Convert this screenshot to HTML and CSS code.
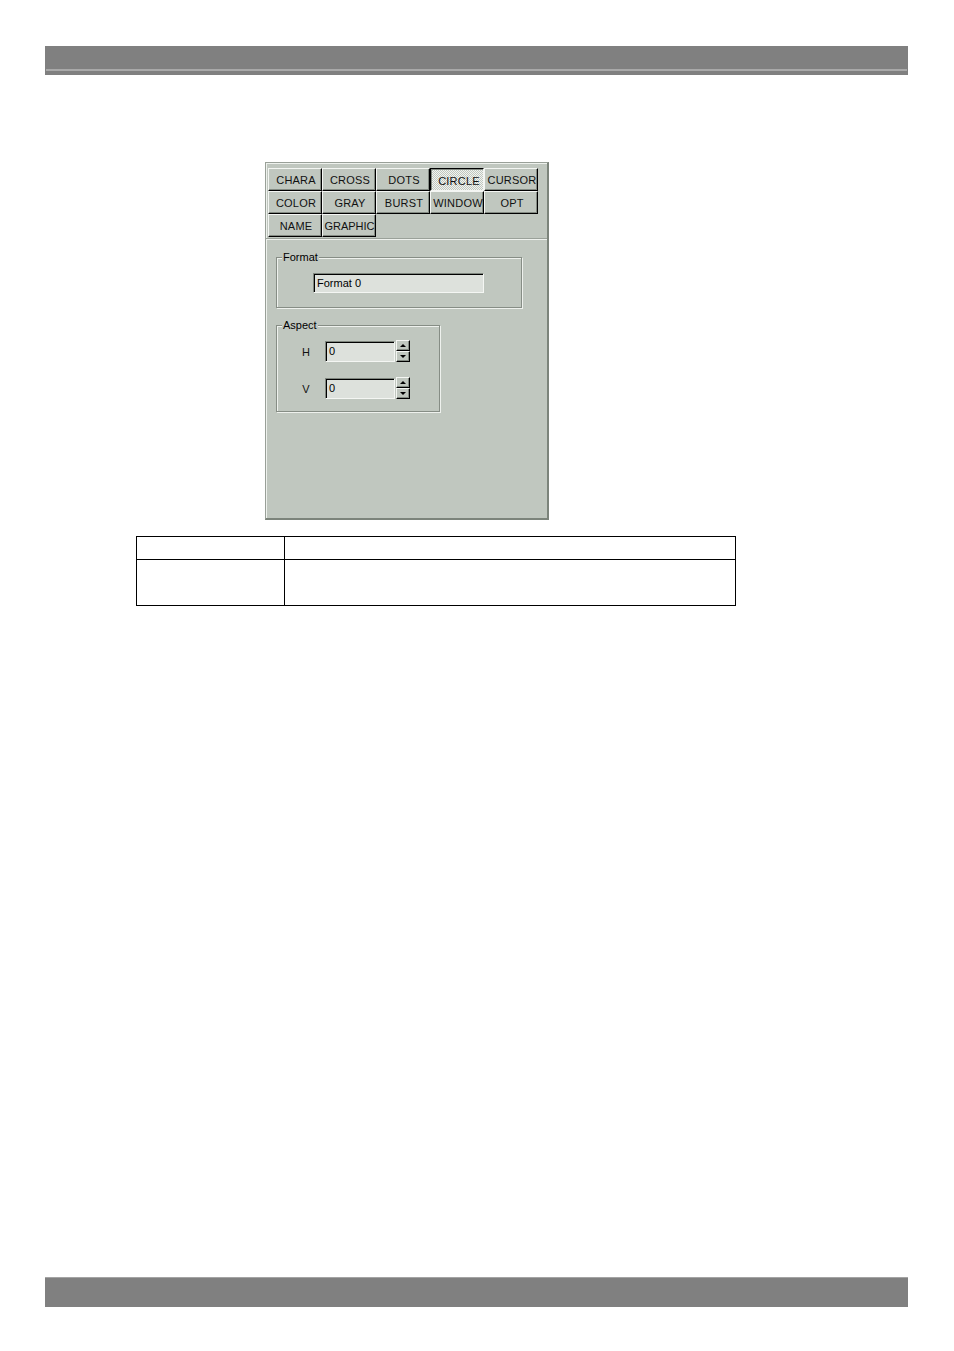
FILE: index.html
```html
<!DOCTYPE html>
<html>
<head>
<meta charset="utf-8">
<link rel="stylesheet" href="styles.css">
</head>
<body>
<div class="bar bar-top"></div>

<div class="dialog">
  <div class="tabs">
    <div class="tab">CHARA</div>
    <div class="tab">CROSS</div>
    <div class="tab">DOTS</div>
    <div class="tab tab-active">CIRCLE</div>
    <div class="tab">CURSOR</div>
    <div class="tab">COLOR</div>
    <div class="tab">GRAY</div>
    <div class="tab">BURST</div>
    <div class="tab">WINDOW</div>
    <div class="tab">OPT</div>
    <div class="tab">NAME</div>
    <div class="tab tab-tight">GRAPHIC</div>
  </div>
  <div class="panel">
    <div class="group group-format">
      <span class="group-label">Format</span>
      <div class="field field-format">Format 0</div>
    </div>
    <div class="group group-aspect">
      <span class="group-label">Aspect</span>
      <div class="spin-row">
        <span class="spin-label">H</span>
        <div class="field field-num">0</div>
        <div class="spinner">
          <div class="spin-btn"><span class="arrow-up"></span></div>
          <div class="spin-btn"><span class="arrow-down"></span></div>
        </div>
      </div>
      <div class="spin-row">
        <span class="spin-label">V</span>
        <div class="field field-num">0</div>
        <div class="spinner">
          <div class="spin-btn"><span class="arrow-up"></span></div>
          <div class="spin-btn"><span class="arrow-down"></span></div>
        </div>
      </div>
    </div>
  </div>
</div>

<table class="info">
  <tr class="row-head"><td class="c1"></td><td class="c2"></td></tr>
  <tr class="row-body"><td class="c1"></td><td class="c2"></td></tr>
</table>

<div class="bar bar-bottom"></div>
</body>
</html>
```

FILE: styles.css
```css
* { box-sizing: border-box; }
html, body { margin: 0; padding: 0; background: #fff; }
body {
  width: 954px;
  min-height: 1351px;
  font-family: "Liberation Sans", Arial, sans-serif;
  padding-top: 46px;
  overflow: hidden;
}

.bar {
  margin-left: 45px;
  width: 863px;
  background: #808080;
}
.bar-top {
  height: 29px;
  background:
    linear-gradient(#a9a9a9, #a9a9a9) 1px 23px / 861px 2px no-repeat,
    #808080;
}
.bar-bottom {
  margin-top: 671px;
  height: 30px;
  border-top: 1px solid #a4a4a4;
}

/* dialog */
.dialog {
  margin: 87px 0 0 265px;
  width: 284px;
  height: 358px;
  background: #c0c7bf;
  border-top: 1px solid #99a098;
  border-left: 1px solid #99a098;
  border-right: 2px solid #7c847b;
  border-bottom: 2px solid #7c847b;
  box-shadow: inset 1px 1px 0 #eef1ed;
  padding: 5px 0 0 0;
  font-size: 11px;
  color: #111;
}

.tabs {
  margin-left: 2px;
  display: grid;
  grid-template-columns: repeat(5, 54px);
  grid-auto-rows: 23px;
}
.tab {
  display: flex;
  align-items: center;
  justify-content: center;
  white-space: nowrap;
  overflow: hidden;
  background: #c0c7bf;
  border-top: 1px solid #f4f6f3;
  border-left: 1px solid #f4f6f3;
  border-right: 1px solid #000;
  border-bottom: 1px solid #000;
  box-shadow: inset -1px -1px 0 #848b83;
  letter-spacing: 0.2px;
  padding-top: 1px;
  padding-left: 2px;
}
.tab-tight {
  letter-spacing: 0;
  padding-left: 1px;
}
.tab-active {
  background: repeating-conic-gradient(#f2f4f1 0 25%, #c0c7bf 0 50%) 0 0 / 2px 2px;
  border-top: 1px solid #000;
  border-left: 1px solid #000;
  border-right: 1px solid #f4f6f3;
  border-bottom: 1px solid #f4f6f3;
  box-shadow: inset 1px 1px 0 #848b83;
  padding-top: 3px;
  padding-left: 4px;
}

.panel {
  margin-top: 1px;
  border-top: 1px solid #9aa199;
  box-shadow: inset 0 1px 0 #eef1ed;
  padding: 18px 0 0 10px;
}

.group {
  position: relative;
  border: 1px solid #868d85;
  box-shadow: inset 1px 1px 0 #eef1ed, 1px 1px 0 #eef1ed;
}
.group-label {
  position: absolute;
  top: -8px;
  left: 5px;
  padding: 0 1px;
  background: #c0c7bf;
  font-size: 11px;
  line-height: 14px;
  color: #000;
}
.group-format {
  width: 246px;
  height: 51px;
  padding: 15px 0 0 36px;
}
.group-aspect {
  margin-top: 17px;
  width: 164px;
  height: 87px;
  padding: 14px 0 0 20px;
}

.field {
  background: #dde1dc;
  border-top: 1px solid #7f867e;
  border-left: 1px solid #7f867e;
  border-right: 1px solid #f4f6f3;
  border-bottom: 1px solid #f4f6f3;
  box-shadow: inset 1px 1px 0 #000;
  color: #000;
  font-size: 11px;
  line-height: 16px;
  padding: 1px 0 0 3px;
}
.field-format {
  width: 171px;
  height: 20px;
}

.spin-row {
  display: flex;
  align-items: center;
  height: 22px;
}
.spin-row + .spin-row { margin-top: 15px; }
.spin-label {
  width: 18px;
  margin-right: 10px;
  text-align: center;
  font-size: 11px;
  color: #111;
  padding-top: 2px;
}
.field-num {
  width: 70px;
  height: 21px;
}
.spinner {
  margin-left: 1px;
  width: 14px;
  height: 22px;
  display: flex;
  flex-direction: column;
}
.spin-btn {
  height: 11px;
  display: flex;
  align-items: center;
  justify-content: center;
  background: #c0c7bf;
  border-top: 1px solid #f4f6f3;
  border-left: 1px solid #f4f6f3;
  border-right: 1px solid #000;
  border-bottom: 1px solid #000;
  box-shadow: inset -1px -1px 0 #848b83;
}
.arrow-up, .arrow-down {
  width: 0;
  height: 0;
  border-left: 3px solid transparent;
  border-right: 3px solid transparent;
}
.arrow-up { border-bottom: 3px solid #000; margin-right: 1px; }
.arrow-down { border-top: 3px solid #000; margin-right: 1px; }

/* table */
.info {
  margin: 16px 0 0 136px;
  width: 600px;
  border-collapse: collapse;
}
.info td {
  border: 1px solid #000;
  padding: 0;
}
.info .c1 { width: 148px; }
.row-head td { height: 23px; }
.row-body td { height: 46px; }
```
